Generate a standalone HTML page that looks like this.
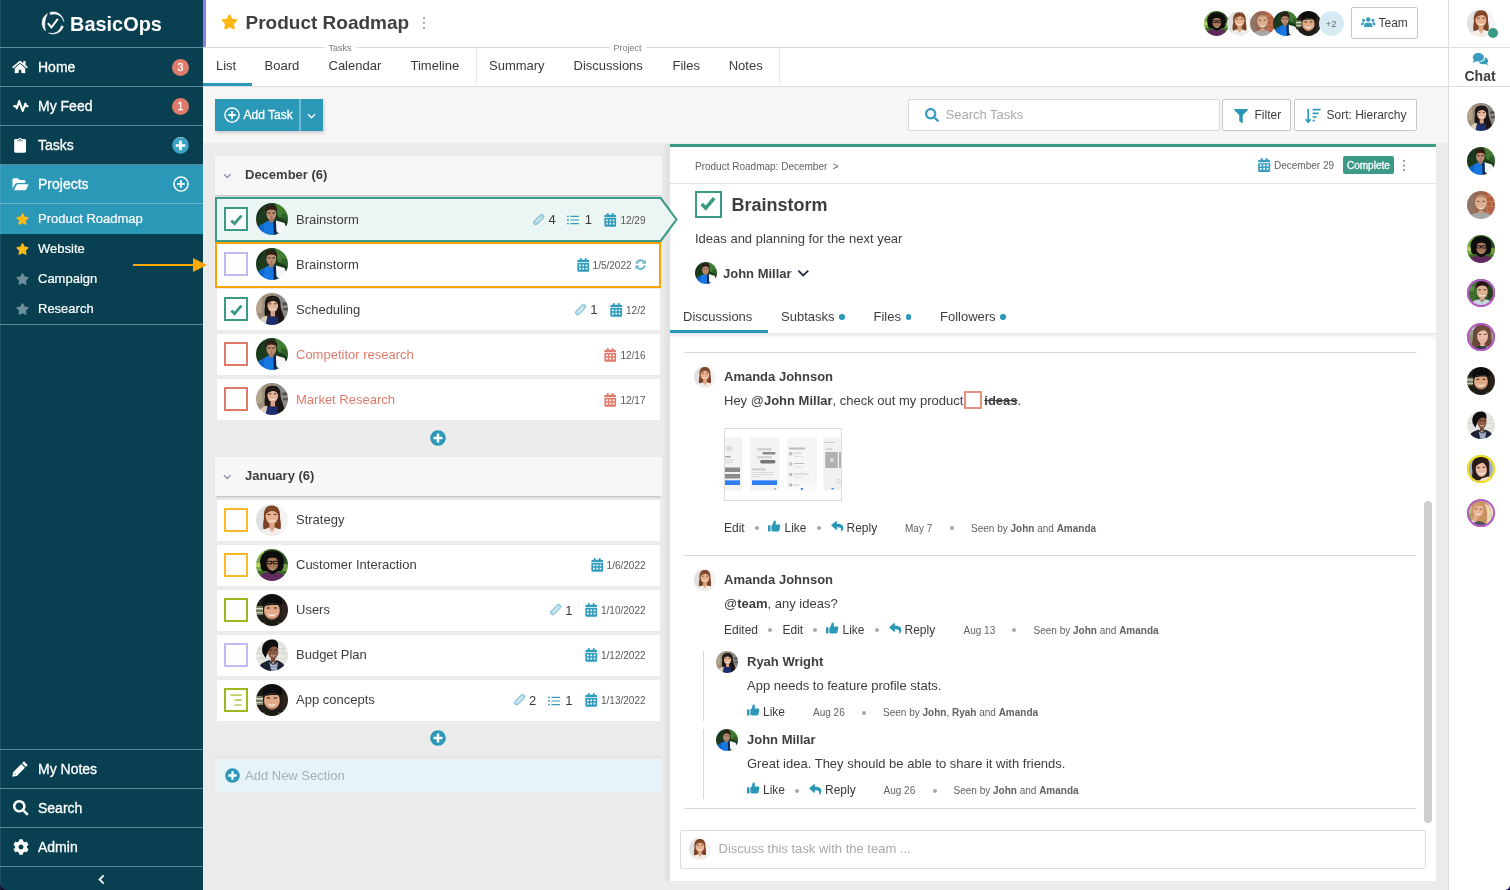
<!DOCTYPE html><html lang="en"><head><meta charset="utf-8"><title>Product Roadmap - BasicOps</title><style>
*{box-sizing:border-box;margin:0;padding:0}
html,body{width:1510px;height:890px;overflow:hidden;background:#ebebeb}
body{font-family:"Liberation Sans",Arial,Helvetica,sans-serif;font-size:13px;color:#3e3e3e;position:relative;-webkit-font-smoothing:antialiased}
#app{position:absolute;left:0;top:0;width:1510px;height:890px;overflow:hidden;will-change:transform}
.abs{position:absolute}
.ic{position:absolute;display:block;overflow:visible}
.av{position:absolute;display:block}
.t{position:absolute;white-space:nowrap;line-height:1}
b{font-weight:700}
/* sidebar */
#sb{position:absolute;left:0;top:0;width:203px;height:890px;background:#084052;color:#fff}
#sb .hl{position:absolute;left:0;width:203px;height:1px;background:#5c8794}
#sb .act{position:absolute;left:0;width:203px;background:#2b98b8}
#sb .m{font-size:14px;color:#fff;left:38px;-webkit-text-stroke:.3px #fff}
#sb .s{font-size:13px;color:#fff;left:38px;-webkit-text-stroke:.2px #fff}
.badge{position:absolute;width:17px;height:17px;border-radius:50%;background:#e07b6b;color:#fff;font-size:10.500px;line-height:17px;text-align:center;-webkit-text-stroke:.3px #fff}
/* header */
#hd{position:absolute;left:203px;top:0;width:1245px;height:48px;background:#fff;border-bottom:1px solid #dcdcdc}
#tabs{position:absolute;left:203px;top:48px;width:1245px;height:39px;background:#fff;border-bottom:1px solid #dcdcdc}
.tab{font-size:13px;color:#3a3a3a}
.btn{position:absolute;background:#fff;border:1px solid #c8c8c8;border-radius:2px}
#tool{position:absolute;left:203px;top:87px;width:1245px;height:56px;background:#f6f6f6}
/* list */
.sec{position:absolute;left:215px;width:447px;height:39px;background:#f7f7f7;box-shadow:0 2px 2px -1px rgba(0,0,0,.22)}
.row{position:absolute;left:217px;width:443px;height:41px;background:#fff}
.cb{position:absolute;width:24px;height:24px;border:2px solid #3a9a85;background:#fff}
.date{font-size:10px;color:#585858}
.cnt{font-size:13px;color:#3a3a3a}
/* detail */
#dp{position:absolute;left:670px;top:144px;width:766px;height:737px;background:#fff;border-top:3px solid #3a9a85}
.sm{font-size:10px;color:#626262}
.act12{font-size:12px;color:#3a3a3a}
.dot{position:absolute;width:4px;height:4px;border-radius:50%;background:#a8a8a8}
.sep{position:absolute;height:1px;background:#d8dbe7}
</style></head><body>
<svg width="0" height="0" style="position:absolute"><defs><clipPath id="cc"><circle cx="16" cy="16" r="16"/></clipPath><filter id="bl" x="-10%" y="-10%" width="120%" height="120%"><feGaussianBlur stdDeviation="0.450"/></filter>
<symbol id="p-john" viewBox="0 0 32 32"><g clip-path="url(#cc)"><g filter="url(#bl)"><g transform="translate(16 14.5) scale(1.0) translate(-16 -14.500)">
<rect width="32" height="32" fill="#1b3b1d"/>
<path d="M19 0H32V17L22 14Z" fill="#3f7d33"/><path d="M23 1L32 9V0Z" fill="#62a44c"/><path d="M0 0H9L5 10L0 14Z" fill="#14301a"/><path d="M26 10L32 12V19L25 15Z" fill="#2d5f2a"/>
<ellipse cx="15.300" cy="6.400" rx="5.800" ry="4.600" fill="#2f2018"/>
<ellipse cx="15.300" cy="10.800" rx="4.900" ry="6.600" fill="#bd8e72"/>
<path d="M10.300 9C11.500 5.800 19 5.800 20.300 9L20.600 6C18.500 3 12 3 10.100 6Z" fill="#2f2018"/>
<path d="M11.800 10H14.500M16.200 10H18.900" stroke="#3d2a20" stroke-width="1.100"/>
<path d="M15.800 12.500L15 16.500" stroke="#8a6048" stroke-width="1" opacity=".7"/>
<rect x="13" y="15.800" width="4.600" height="4" fill="#a9795d"/>
<path d="M0 27L3 23L12.500 17.500L15.500 20.500L18 17.500L20.500 18V32H0Z" fill="#1878e0"/>
<path d="M3 23.500L9 20L7 32H0V27Z" fill="#1166c8"/>
<path d="M20 17.500L28.500 20L31 26L24 31.500L20 28Z" fill="#f6f6f6"/>
<path d="M17.300 18.800L19.900 17.600L20.600 32H17.800Z" fill="#10244f"/>
<path d="M24 31.500L31 26L32 32H24Z" fill="#1878e0"/></g></g></g></symbol>
<symbol id="p-ryah" viewBox="0 0 32 32"><g clip-path="url(#cc)"><g filter="url(#bl)"><g transform="translate(16 14.5) scale(1.0) translate(-16 -14.500)">
<rect width="32" height="32" fill="#9c8f7c"/>
<rect x="20" y="0" width="12" height="32" fill="#8b8a86"/><rect x="0" y="0" width="6" height="20" fill="#b3a48c"/>
<rect x="26.500" y="9.500" width="5.500" height="2.700" fill="#4e4c4a"/><rect x="27" y="15" width="5" height="2.400" fill="#55524f"/>
<path d="M9 13C8 5 12 2.800 16.800 2.800C22 2.800 25 6 24.500 13C25 18 28.500 22 28.500 28L24 31L10 26C8 22 8.500 17 9 13Z" fill="#1e1512"/>
<ellipse cx="16.800" cy="12.400" rx="5.300" ry="6.900" fill="#e2b299"/>
<path d="M11.300 11C11.500 6.500 15 5 18 5.500C21 6 22.500 8.500 22.300 12C21 8.500 18.500 7.500 16.500 8C14 8.500 12.300 9.500 11.300 11Z" fill="#1e1512"/>
<path d="M13.600 14.800C15.300 16.800 18.300 16.800 20 14.800C19.300 17.800 14.300 17.800 13.600 14.800Z" fill="#fff"/>
<path d="M12.800 10.800H15.300M18 10.800H20.500" stroke="#3a2a22" stroke-width=".9"/>
<rect x="14.500" y="18.500" width="4.600" height="5" fill="#d5a189"/>
<path d="M2 32C3 26 6 24 11.500 22.500L13 32Z" fill="#dbcfba"/>
<path d="M9.500 32L11.500 23L16.800 24.500L22 23L24 32Z" fill="#1a2f6e"/>
<path d="M21.500 20C24 22 27 25 28.500 28L25 32H22Z" fill="#1e1512"/></g></g></g></symbol>
<symbol id="p-amanda" viewBox="0 0 32 32"><g clip-path="url(#cc)"><g filter="url(#bl)"><g transform="translate(16 14.5) scale(1.0) translate(-16 -14.500)">
<rect width="32" height="32" fill="#f4f4f4"/>
<rect x="0" y="0" width="12" height="32" fill="#e0e0e0"/>
<path d="M8 14C7 5 11 1.500 16 1.500C21 1.500 24.500 5 24 13C24.500 18 25.500 21 24.500 25L7.500 25C6.500 21 7.500 18 8 14Z" fill="#7c4326"/>
<ellipse cx="15.900" cy="12.200" rx="6.300" ry="8.300" fill="#e6b190"/>
<path d="M9.500 11C9.500 5 14 3.500 17 4C20.500 4.500 22.500 7 22.300 11C20.500 7.500 18 6.500 15.500 7C13 7.500 10.800 9 9.500 11Z" fill="#7f4528"/>
<path d="M12.300 15.300C14.300 17.600 17.700 17.600 19.700 15.300C18.900 18.800 13.100 18.800 12.300 15.300Z" fill="#fff"/>
<path d="M11.500 10.500H14.500M17.500 10.500H20.500" stroke="#5a3a2a" stroke-width="1"/>
<rect x="13.300" y="19.500" width="5.400" height="5" fill="#dba483"/>
<path d="M3 32C4 27 8 25.500 13 23.500L16 27L19 23.500C24 25.500 28 27 29 32Z" fill="#f1ece7"/>
<path d="M13 23.500L16 28.500L19 23.500Z" fill="#e0a988"/></g></g></g></symbol>
<symbol id="p-curly" viewBox="0 0 32 32"><g clip-path="url(#cc)"><g filter="url(#bl)"><g transform="translate(16 14.5) scale(1.0) translate(-16 -14.500)">
<rect width="32" height="32" fill="#3c6b28"/>
<rect x="0" y="0" width="8" height="22" fill="#79ac45"/><rect x="0" y="14" width="6" height="4" fill="#b9d36a"/><rect x="25" y="0" width="7" height="20" fill="#2a5020"/><rect x="24" y="15" width="8" height="7" fill="#6c9c40"/>
<path d="M4.500 16C2.500 7 8 1.500 16.500 1.500C24.500 1.500 29.500 7 27.500 16C27.500 20 26 22 24 22L8 22C6 22 4.500 20 4.500 16Z" fill="#0e0c0b"/>
<ellipse cx="16.400" cy="14.500" rx="5.800" ry="7.600" fill="#a97756"/>
<path d="M10.600 17C10.800 24 13.500 25.200 16.400 25.200C19.300 25.200 22 24 22.200 17C21 20.500 19 21 16.400 21C13.800 21 11.800 20.500 10.600 17Z" fill="#17110e"/>
<path d="M10.400 11.500C11 7 14 6.300 16.400 6.300C18.800 6.300 21.800 7 22.400 11.500C21 9.300 18.800 8.800 16.400 8.800C14 8.800 11.800 9.300 10.400 11.500Z" fill="#0e0c0b"/>
<path d="M10.800 12.300H15.500V14.900H10.800ZM17.300 12.300H22V14.900H17.300ZM15.500 13.100H17.300" fill="none" stroke="#161616" stroke-width="1"/>
<path d="M13.800 19.800C15.200 21.200 17.600 21.200 19 19.800C18.400 22 14.400 22 13.800 19.800Z" fill="#f3ece6"/>
<path d="M1 32C2 26.500 7 24.500 12 23L16.400 26L20.800 23C25.800 24.500 30 26.500 31 32Z" fill="#5f295c"/></g></g></g></symbol>
<symbol id="p-hat" viewBox="0 0 32 32"><g clip-path="url(#cc)"><g filter="url(#bl)"><g transform="translate(16 14.5) scale(1.0) translate(-16 -14.500)">
<rect width="32" height="32" fill="#231b17"/>
<rect x="0" y="12" width="7" height="9" fill="#6f7a5c"/><rect x="0" y="14" width="7" height="1.500" fill="#d8dccb"/><rect x="0" y="18" width="7" height="1.300" fill="#c9cdb9"/><rect x="26" y="10" width="6" height="22" fill="#2f241d"/>
<ellipse cx="15.900" cy="16.500" rx="7.900" ry="9.300" fill="#e0a885"/>
<path d="M6.500 11.500C5.500 3.500 11 0.300 16.500 0.300C22.500 0.300 27 4 25.800 11.500C22 8.800 10.500 8.800 6.500 11.500Z" fill="#0c0c0c"/>
<path d="M6.300 11.200C11 8.400 22 8.400 26.800 11.600C22 10.500 11 10.500 6.300 12.800Z" fill="#1d1d1d"/>
<path d="M10 21C11 25.500 13 26.500 15.900 26.500C18.800 26.500 20.800 25.500 21.800 21C20.500 23.800 18.500 24.300 15.900 24.300C13.300 24.300 11.300 23.800 10 21Z" fill="#5a3d2e" opacity=".55"/>
<path d="M11.800 19.300C14 21.300 17.800 21.300 20 19.300C19.300 23 12.500 23 11.800 19.300Z" fill="#fff"/>
<path d="M10.800 14H14M17.800 14H21" stroke="#2a1d16" stroke-width="1.100"/>
<path d="M1 32C2 28 7 26.500 11.500 25.500L15.900 28L20.300 25.500C25 26.500 30 28 31 32Z" fill="#1d1b18"/>
<path d="M3 30L9 27.500L8 32H3Z" fill="#4b4a32"/><path d="M22 28L27 28.500L26 32H22Z" fill="#45432e"/></g></g></g></symbol>
<symbol id="p-blazer" viewBox="0 0 32 32"><g clip-path="url(#cc)"><g filter="url(#bl)"><g transform="translate(16 14.5) scale(1.0) translate(-16 -14.500)">
<rect width="32" height="32" fill="#e7e7e3"/>
<path d="M0 4.500H32M0 9.500H32M0 14.500H32M0 19.500H32M5 0V4.500M15 0V4.500M26 0V4.500M10 4.500V9.500M28 4.500V9.500M3 9.500V14.500M27 9.500V14.500M6 14.500V19.500M29 14.500V19.500" stroke="#d2d2cd" stroke-width=".7" fill="none"/>
<path d="M6.500 14C4.500 6 9.500 0.500 16 0.500C20 0.300 22.500 3 22.200 7L20 14L12 13L9.500 19Z" fill="#100d0d"/>
<ellipse cx="17.100" cy="12.600" rx="5.300" ry="7.200" fill="#8a5a44"/>
<path d="M11.500 13C10.500 6 14.500 3.800 18 4.300C21 4.800 22.500 7 22.200 9.500C20 7 17 7 15 8.500C13.300 9.700 12.200 11.500 11.500 13Z" fill="#100d0d"/>
<path d="M14.800 15.800C16 17 18.600 17 19.800 15.800C19.300 17.900 15.300 17.900 14.800 15.800Z" fill="#f2e6e0"/>
<path d="M13.500 11H16M18.500 11H21" stroke="#2a1a14" stroke-width=".9"/>
<rect x="14.800" y="18.800" width="4.600" height="4.500" fill="#7a4d39"/>
<path d="M1.500 32C2.500 25.500 7 23 13.500 21L17.100 25L20.700 21C26 23 29.500 25.500 30.500 32Z" fill="#1d2030"/>
<path d="M13 23L15.500 32H21L22 23L17.100 26Z" fill="#8d9db3"/>
<path d="M14 26L20 27M14.500 29L20.500 30" stroke="#c5cedb" stroke-width=".8"/></g></g></g></symbol>
<symbol id="p-bald" viewBox="0 0 32 32"><g clip-path="url(#cc)"><g filter="url(#bl)"><g transform="translate(16 14.5) scale(1.0) translate(-16 -14.500)">
<rect width="32" height="32" fill="#9b6650"/>
<rect x="19" y="0" width="13" height="32" fill="#b25e42"/><rect x="0" y="0" width="8" height="32" fill="#8d7468"/>
<path d="M19 6H32M19 12H32M19 18H32M19 24H32M25 0V6M22 6V12M28 12V18M23 18V24" stroke="#d08a6c" stroke-width=".7" fill="none"/>
<ellipse cx="16" cy="13.500" rx="6.800" ry="8.800" fill="#dcae90"/>
<path d="M9.300 9C10 3.500 22 3.500 22.700 9C20 6.500 12 6.500 9.300 9Z" fill="#a88468" opacity=".8"/>
<path d="M9.300 15C9.500 23.500 12.800 25 16 25C19.200 25 22.500 23.500 22.700 15C21.500 20 19 21 16 21C13 21 10.500 20 9.300 15Z" fill="#8a6a52"/>
<path d="M12.800 18.300C14.500 19.800 17.500 19.800 19.200 18.300C18.600 21 13.400 21 12.800 18.300Z" fill="#fff"/>
<path d="M11.300 11.800H14.300M17.700 11.800H20.700" stroke="#5a4030" stroke-width="1"/>
<rect x="13.300" y="22" width="5.400" height="4" fill="#cf9f82"/>
<path d="M1 32C2 27.500 7 25.500 12.500 24.500L16 26.500L19.500 24.500C25 25.500 30 27.500 31 32Z" fill="#a7a7a7"/></g></g></g></symbol>
<symbol id="p-greenman" viewBox="0 0 32 32"><g clip-path="url(#cc)"><g filter="url(#bl)"><g transform="translate(16 14.5) scale(1.0) translate(-16 -14.500)">
<rect width="32" height="32" fill="#2f5627"/>
<rect x="0" y="0" width="11" height="32" fill="#3d6e2e"/><rect x="2" y="8" width="6" height="6" fill="#5a8e40"/><rect x="24" y="0" width="8" height="22" fill="#28401f"/>
<path d="M10.500 11C9.500 4 13.500 2.500 17.500 2.500C22 2.500 25 5 24 11L22 8H12Z" fill="#231814"/>
<ellipse cx="17.300" cy="14" rx="6.300" ry="8.300" fill="#e0b092"/>
<path d="M10.800 11C12 6.500 22.500 6 24 11L24.200 7.500C21.500 4 13 4 10.800 7.500Z" fill="#231814"/>
<path d="M13.300 17.300C15.300 19.300 19.300 19.300 21.300 17.300C20.500 20.500 14.100 20.500 13.300 17.300Z" fill="#fff"/>
<path d="M12.800 12.300H15.800M18.800 12.300H21.800" stroke="#3a2820" stroke-width="1"/>
<rect x="14.500" y="21" width="5.600" height="3.500" fill="#cfa082"/>
<path d="M2 32C3 26.500 8 24.500 13.500 23L17.300 26L21 23C26.500 24.500 30 26.500 31 32Z" fill="#c3d1da"/></g></g></g></symbol>
<symbol id="p-brownhair" viewBox="0 0 32 32"><g clip-path="url(#cc)"><g filter="url(#bl)"><g transform="translate(16 14.5) scale(1.0) translate(-16 -14.500)">
<rect width="32" height="32" fill="#979d88"/>
<rect x="0" y="4" width="10" height="4" fill="#c5cbd0"/><rect x="0" y="14" width="8" height="10" fill="#8b8f6c"/>
<path d="M7 15C6 5 11.500 2 17.500 2C23.500 2 28.500 5 27.500 15C28 21 29.500 25 28.500 30L5.500 30C4.500 25 6.500 21 7 15Z" fill="#6b4a38"/>
<ellipse cx="17.800" cy="14.700" rx="6.200" ry="8.700" fill="#eabba8"/>
<path d="M11.500 13C11.500 6 15.500 4.500 18.500 5C22 5.500 24.300 8 24 13C22.500 9 20 8 17.500 8.500C15 9 12.800 10.500 11.500 13Z" fill="#73503c"/>
<path d="M15 18.800C16.500 20 19.300 20 20.800 18.800C20.300 21 15.500 21 15 18.800Z" fill="#d98a8a"/>
<path d="M13.300 13H16.300M19.300 13H22.300" stroke="#4a342a" stroke-width="1"/>
<rect x="15" y="22.500" width="5.400" height="4" fill="#dcaa96"/>
<path d="M8 32C9 28 12 27 15 26L17.800 28L20.500 26C23 27 25 28 26 32Z" fill="#2c3a44"/>
<path d="M21 26.500L29 28V32H24Z" fill="#b5a08a"/></g></g></g></symbol>
<symbol id="p-darkhair" viewBox="0 0 32 32"><g clip-path="url(#cc)"><g filter="url(#bl)"><g transform="translate(16 14.5) scale(1.0) translate(-16 -14.500)">
<rect width="32" height="32" fill="#a3aec4"/>
<path d="M6 17C4 6 10 1.500 16 1.500C22 1.500 26.500 5 25.500 14C25.500 19 26 23 24.500 26L8 30C5.500 26 6.500 21 6 17Z" fill="#2b1a16"/>
<ellipse cx="16.300" cy="16.500" rx="6.400" ry="8.500" fill="#e9b9a2" transform="rotate(-8 16.300 16.500)"/>
<path d="M9.500 14C9.500 7 14 4.500 17.500 5C21 5.500 23.500 8 23.300 13C21.500 9 19 8.300 16.500 9C13.500 9.800 11 11.500 9.500 14Z" fill="#2b1a16"/>
<path d="M13 19.800C15 21.800 18.800 21.300 20.300 19C19.800 22.800 14 23.300 13 19.800Z" fill="#fff"/>
<path d="M11.500 14.500H14.500M17.800 14H20.800" stroke="#3a2620" stroke-width="1"/>
<path d="M16 27L24 24.500C28 25.500 30 28 31 32H14Z" fill="#f2dcd8"/>
<path d="M6.500 20C6 25 7 29 9.500 32H4Z" fill="#2b1a16"/></g></g></g></symbol>
<symbol id="p-blonde" viewBox="0 0 32 32"><g clip-path="url(#cc)"><g filter="url(#bl)"><g transform="translate(16 14.5) scale(1.0) translate(-16 -14.500)">
<rect width="32" height="32" fill="#f3eedc"/>
<rect x="0" y="0" width="9" height="24" fill="#97ad5c"/><rect x="0" y="8" width="6" height="8" fill="#c1cc7a"/>
<path d="M5 16C4 6 9 2 14.500 2C20 2 24 4 26 9C28.500 14 29 22 27.500 29L16 29L6 24C5 21 5.500 19 5 16Z" fill="#c9935f"/>
<path d="M20 5C24 6 27 10 27.500 16C28 21 28 26 27 29L22 29C24 22 23.500 12 20 5Z" fill="#ead9b4"/>
<ellipse cx="13" cy="13" rx="5.600" ry="7.300" fill="#ebb698" transform="rotate(12 13 13)"/>
<path d="M7 11C7.500 5.500 11.500 4 14.500 4.500C17.500 5 19.500 7 19.500 11C18 8 16 7.300 14 7.800C11.500 8.300 8.500 9.500 7 11Z" fill="#cf9a66"/>
<path d="M10.300 16.300C12 17.800 14.800 17.800 16.300 16.300C15.800 18.900 11 18.900 10.300 16.300Z" fill="#fff"/>
<path d="M9 11.300H11.800M14.500 11.800H17.300" stroke="#5a3d2c" stroke-width=".9"/>
<path d="M7.500 19C9 18 12 19.500 12.500 22L10 27L6.500 24Z" fill="#e2ab8c"/>
<path d="M5 32C6 27 10 25.500 14 25L20 27L23 32Z" fill="#4c5258"/></g></g></g></symbol>
</defs></svg>
<div id="app">
<div class="abs" style="left:203px;top:143px;width:1245px;height:747px;background:#ebebeb"></div>
<div id="sb">
<div class="act" style="top:164px;height:70px"></div>
<div class="hl" style="top:47px"></div>
<div class="hl" style="top:86px"></div>
<div class="hl" style="top:125px"></div>
<div class="hl" style="top:164px"></div>
<div class="hl" style="top:203px;background:#6fb3c8"></div>
<div class="hl" style="top:324px"></div>
<div class="hl" style="top:749px"></div>
<div class="hl" style="top:788px"></div>
<div class="hl" style="top:827px"></div>
<div class="hl" style="top:866px"></div>
<svg class="ic" style="left:41px;top:11px" width="24" height="24" viewBox="0 0 24 24"><g fill="#fff" stroke="#fff" stroke-width=".5" stroke-linejoin="round"><path d="M6.500 2.700A10.700 10.700 0 0 0 4.500 19.900A24 24 0 0 1 6.500 2.700Z"/><path d="M8.800 1.400A11 11 0 0 1 22.900 10.800A10 10 0 0 0 9.600 3.600Z"/><path d="M22.400 15.500A11 11 0 0 1 7.600 22.100A10 10 0 0 0 20.300 14.800Z"/></g><path d="M6.900 12.200L10.400 16.300L16.900 7.900" fill="none" stroke="#fff" stroke-width="2"/></svg>
<div class="t" style="left:70px;top:13.800px;font-size:20.400px;font-weight:700;color:#fff;transform:scaleX(.977);transform-origin:0 0">BasicOps</div>
<svg class="ic" viewBox="0 0 576 512" width="16" height="14" style="color:#fff;fill:#fff;left:12px;top:60px;" fill="currentColor"><path d="M280.370 148.260L96 300.110V464a16 16 0 0 0 16 16l112.060-.290a16 16 0 0 0 15.920-16V368a16 16 0 0 1 16-16h64a16 16 0 0 1 16 16v95.640a16 16 0 0 0 16 16.050L464 480a16 16 0 0 0 16-16V300L295.670 148.260a12.190 12.190 0 0 0-15.300 0zM571.600 251.470L488 182.560V44.050a12 12 0 0 0-12-12h-56a12 12 0 0 0-12 12v72.610L318.470 43a48 48 0 0 0-61 0L4.340 251.470a12 12 0 0 0-1.600 16.900l25.500 31A12 12 0 0 0 45.150 301l235.220-193.740a12.190 12.190 0 0 1 15.300 0L530.900 301a12 12 0 0 0 16.900-1.600l25.500-31a12 12 0 0 0-1.700-16.930z"/></svg>
<div class="t m" style="left:38px;top:60.00px;font-size:14px;">Home</div>
<div class="badge" style="left:172px;top:58.500px">3</div>
<svg class="ic" viewBox="0 0 16 12" width="16" height="12" style="color:#fff;fill:#fff;left:12.5px;top:100px;" fill="currentColor"><path d="M0.400 6.100H2.600L3.800 8.300L6.200 1L9.700 11L12.400 3.600L13.400 6.100H15.400" fill="none" stroke="currentColor" stroke-width="2.100" stroke-linejoin="round" stroke-linecap="butt"/></svg>
<div class="t m" style="left:38px;top:99.00px;font-size:14px;">My Feed</div>
<div class="badge" style="left:172px;top:97.500px">1</div>
<svg class="ic" viewBox="0 0 12 16" width="12.2" height="15.8" style="color:#fff;fill:#fff;left:14.4px;top:136.8px;" fill="currentColor"><path d="M1.500 2H4.200A1.900 1.900 0 0 1 7.800 2H10.500A1.500 1.500 0 0 1 12 3.500V14.500A1.500 1.500 0 0 1 10.500 16H1.500A1.500 1.500 0 0 1 0 14.500V3.500A1.500 1.500 0 0 1 1.500 2ZM6 1.400A0.800 0.800 0 1 0 6 3A0.800 0.800 0 1 0 6 1.400Z" fill-rule="evenodd"/><rect x="3" y="3.300" width="6" height="1.100" fill="#084052" opacity=".55"/></svg>
<div class="t m" style="left:38px;top:138.00px;font-size:14px;">Tasks</div>
<div class="abs" style="left:172.800px;top:137.300px;width:15.400px;height:15.400px;border-radius:50%;background:#fff"></div>
<svg class="ic" viewBox="0 0 512 512" width="17" height="17" style="color:#3ba3c3;fill:#3ba3c3;left:172px;top:136.5px;" fill="currentColor"><path d="M256 8C119 8 8 119 8 256s111 248 248 248 248-111 248-248S393 8 256 8zm144 276c0 6.600-5.400 12-12 12h-92v92c0 6.600-5.400 12-12 12h-56c-6.600 0-12-5.400-12-12v-92h-92c-6.600 0-12-5.400-12-12v-56c0-6.600 5.400-12 12-12h92v-92c0-6.600 5.400-12 12-12h56c6.600 0 12 5.400 12 12v92h92c6.600 0 12 5.400 12 12v56z"/></svg>
<svg class="ic" viewBox="0 0 18 14" width="17" height="12.5" style="color:#fff;fill:#fff;left:12px;top:178px;" fill="currentColor"><path d="M17.800 7.900L15.300 12.900A1.700 1.700 0 0 1 13.800 13.800H1.600L4.600 7.800A1.700 1.700 0 0 1 6.100 6.900H17.200C17.800 6.900 18.100 7.400 17.800 7.900ZM6.100 5.700H14.500V3.700A1.500 1.500 0 0 0 13 2.200H8L6.200 0.300H1.500A1.500 1.500 0 0 0 0 1.800V11.800L2.900 6.900C3.600 5.900 4.800 5.700 6.100 5.700Z"/></svg>
<div class="t m" style="left:38px;top:177.00px;font-size:14px;">Projects</div>
<svg class="ic" viewBox="0 0 16 16" width="16" height="16" style="color:#fff;fill:#fff;left:172.5px;top:176px;" fill="currentColor"><circle cx="8" cy="8" r="7.100" fill="none" stroke="currentColor" stroke-width="1.450"/><path d="M8 4.300V11.700M4.300 8H11.700" stroke="currentColor" stroke-width="1.900" fill="none"/></svg>
<svg class="ic" viewBox="0 0 576 512" width="13" height="12" style="color:#fdb913;fill:#fdb913;left:15.5px;top:212.5px;" fill="currentColor"><path d="M259.3 17.8L194 150.2 47.9 171.5c-26.2 3.8-36.7 36.1-17.7 54.6l105.7 103-25 145.5c-4.500 26.300 23.200 46 46.400 33.700L288 439.600l130.700 68.700c23.200 12.200 50.900-7.400 46.400-33.700l-25-145.500 105.700-103c19-18.500 8.500-50.800-17.700-54.600L382 150.200 316.700 17.800c-11.700-23.600-45.600-23.900-57.400 0z"/></svg>
<div class="t s" style="left:38px;top:211.80px;font-size:13px;">Product Roadmap</div>
<svg class="ic" viewBox="0 0 576 512" width="13" height="12" style="color:#fdb913;fill:#fdb913;left:15.5px;top:242.5px;" fill="currentColor"><path d="M259.3 17.8L194 150.2 47.9 171.5c-26.2 3.8-36.7 36.1-17.7 54.6l105.7 103-25 145.5c-4.500 26.300 23.200 46 46.400 33.700L288 439.600l130.700 68.700c23.200 12.200 50.900-7.400 46.400-33.700l-25-145.500 105.700-103c19-18.500 8.500-50.800-17.700-54.600L382 150.200 316.700 17.800c-11.700-23.600-45.600-23.900-57.400 0z"/></svg>
<div class="t s" style="left:38px;top:241.80px;font-size:13px;">Website</div>
<svg class="ic" viewBox="0 0 576 512" width="13" height="12" style="color:#6d8e9a;fill:#6d8e9a;left:15.5px;top:272.5px;" fill="currentColor"><path d="M259.3 17.8L194 150.2 47.9 171.5c-26.2 3.8-36.7 36.1-17.7 54.6l105.7 103-25 145.5c-4.500 26.300 23.200 46 46.400 33.700L288 439.600l130.700 68.700c23.200 12.200 50.900-7.400 46.400-33.700l-25-145.500 105.700-103c19-18.500 8.500-50.800-17.700-54.600L382 150.200 316.700 17.800c-11.700-23.600-45.600-23.900-57.400 0z"/></svg>
<div class="t s" style="left:38px;top:271.80px;font-size:13px;">Campaign</div>
<svg class="ic" viewBox="0 0 576 512" width="13" height="12" style="color:#6d8e9a;fill:#6d8e9a;left:15.5px;top:302.5px;" fill="currentColor"><path d="M259.3 17.8L194 150.2 47.9 171.5c-26.2 3.8-36.7 36.1-17.7 54.6l105.7 103-25 145.5c-4.500 26.300 23.200 46 46.400 33.700L288 439.600l130.700 68.700c23.200 12.200 50.900-7.400 46.400-33.700l-25-145.500 105.700-103c19-18.500 8.500-50.800-17.700-54.600L382 150.200 316.700 17.800c-11.700-23.600-45.600-23.900-57.400 0z"/></svg>
<div class="t s" style="left:38px;top:301.80px;font-size:13px;">Research</div>
<svg class="ic" viewBox="0 0 16 16" width="17" height="17" style="color:#fff;fill:#fff;left:12px;top:760.3px;" fill="currentColor"><path d="M11.300 1.200L14.800 4.700L13 6.500L9.500 3ZM8.700 3.800L12.200 7.300L4.500 15L0.300 15.700L1 11.500Z"/><path d="M2 12.600L3.400 14" stroke="#084052" stroke-width=".7" fill="none"/></svg>
<div class="t m" style="left:38px;top:762.00px;font-size:14px;">My Notes</div>
<svg class="ic" viewBox="0 0 512 512" width="15.5" height="15.5" style="color:#fff;fill:#fff;left:12.5px;top:800px;" fill="currentColor"><path d="M505 442.700L405.300 343c-4.500-4.500-10.600-7-17-7H372c27.600-35.300 44-79.700 44-128C416 93.100 322.900 0 208 0S0 93.100 0 208s93.100 208 208 208c48.300 0 92.700-16.400 128-44v16.300c0 6.400 2.500 12.500 7 17l99.700 99.700c9.400 9.400 24.600 9.400 33.900 0l28.300-28.300c9.400-9.400 9.400-24.600.1-34zM208 336c-70.700 0-128-57.200-128-128 0-70.700 57.200-128 128-128 70.700 0 128 57.200 128 128 0 70.700-57.200 128-128 128z"/></svg>
<div class="t m" style="left:38px;top:801.00px;font-size:14px;">Search</div>
<svg class="ic" viewBox="0 0 512 512" width="16" height="16" style="color:#fff;fill:#fff;left:12.5px;top:839px;" fill="currentColor"><path d="M487.400 315.700l-42.600-24.600c4.300-23.200 4.300-47 0-70.200l42.600-24.600c4.900-2.800 7.100-8.600 5.500-14-11.100-35.600-30-67.800-54.700-94.600-3.800-4.100-10-5.100-14.800-2.300L380.800 110c-17.900-15.400-38.500-27.300-60.800-35.100V25.800c0-5.600-3.900-10.500-9.400-11.700-36.700-8.200-74.300-7.800-109.200 0-5.500 1.200-9.400 6.100-9.400 11.700V75c-22.200 7.900-42.800 19.800-60.800 35.100L88.700 85.500c-4.900-2.800-11-1.900-14.800 2.300-24.700 26.700-43.600 58.900-54.700 94.600-1.700 5.400.6 11.200 5.500 14L67.300 221c-4.300 23.200-4.300 47 0 70.200l-42.600 24.600c-4.900 2.800-7.100 8.600-5.500 14 11.100 35.600 30 67.800 54.700 94.600 3.800 4.100 10 5.100 14.800 2.300l42.600-24.600c17.900 15.400 38.500 27.300 60.800 35.100v49.200c0 5.600 3.900 10.500 9.400 11.700 36.700 8.200 74.300 7.800 109.200 0 5.500-1.200 9.400-6.100 9.400-11.700v-49.200c22.200-7.900 42.800-19.800 60.800-35.100l42.600 24.600c4.900 2.800 11 1.900 14.800-2.300 24.700-26.700 43.600-58.900 54.700-94.600 1.500-5.500-.7-11.300-5.600-14.100zM256 336c-44.100 0-80-35.900-80-80s35.900-80 80-80 80 35.900 80 80-35.900 80-80 80z"/></svg>
<div class="t m" style="left:38px;top:840.00px;font-size:14px;">Admin</div>
<svg class="ic" viewBox="0 0 8 12" width="7" height="11" style="color:#e6eef0;fill:#e6eef0;left:97.5px;top:873.5px;" fill="currentColor"><path d="M6.500 1.200L1.800 6L6.500 10.800" fill="none" stroke="currentColor" stroke-width="2.200" stroke-linecap="butt"/></svg>
</div>
<div class="abs" style="left:133px;top:264px;width:62px;height:1.500px;background:#fba900"></div>
<svg class="ic" style="left:193px;top:257.500px" width="14" height="14" viewBox="0 0 14 14"><path d="M0 0L14 7L0 14Z" fill="#fba900"/></svg>
<div id="hd"></div>
<div class="abs" style="left:203px;top:0;width:3px;height:47px;background:#8a7ff0"></div>
<svg class="ic" viewBox="0 0 576 512" width="17" height="15.5" style="color:#fdb913;fill:#fdb913;left:220.5px;top:13.5px;" fill="currentColor"><path d="M259.3 17.8L194 150.2 47.9 171.5c-26.2 3.8-36.7 36.1-17.7 54.6l105.7 103-25 145.5c-4.500 26.300 23.200 46 46.400 33.700L288 439.600l130.700 68.700c23.200 12.200 50.900-7.400 46.400-33.700l-25-145.500 105.700-103c19-18.500 8.500-50.800-17.700-54.600L382 150.200 316.700 17.800c-11.700-23.600-45.600-23.900-57.400 0z"/></svg>
<div class="t " style="left:245.5px;top:13.40px;font-size:19px;font-weight:700;color:#404040">Product Roadmap</div>
<svg class="ic" viewBox="0 0 4 14" width="4" height="14" style="color:#9a9a9a;fill:#9a9a9a;left:422px;top:16px;" fill="currentColor"><circle cx="2" cy="2" r="1.100"/><circle cx="2" cy="7" r="1.100"/><circle cx="2" cy="12" r="1.100"/></svg>
<svg class="av" style="left:1203.5px;top:10.5px;" width="25" height="25" viewBox="0 0 32 32"><use href="#p-curly"/></svg>
<svg class="av" style="left:1226.5px;top:10.5px;" width="25" height="25" viewBox="0 0 32 32"><use href="#p-amanda"/></svg>
<svg class="av" style="left:1249.5px;top:10.5px;" width="25" height="25" viewBox="0 0 32 32"><use href="#p-bald"/></svg>
<svg class="av" style="left:1272.5px;top:10.5px;" width="25" height="25" viewBox="0 0 32 32"><use href="#p-john"/></svg>
<svg class="av" style="left:1295.5px;top:10.5px;" width="25" height="25" viewBox="0 0 32 32"><use href="#p-hat"/></svg>
<div class="abs" style="left:1318.500px;top:10.500px;width:25px;height:25px;border-radius:50%;background:#d5eaf2;color:#707070;font-size:9.500px;line-height:25px;text-align:center">+2</div>
<div class="btn" style="left:1350.500px;top:7px;width:67px;height:32px"></div>
<svg class="ic" viewBox="0 0 20 14" width="14.5" height="10" style="color:#3a9dbd;fill:#3a9dbd;left:1360.5px;top:17px;" fill="currentColor"><circle cx="10" cy="3.600" r="3.100"/><path d="M4.200 14V11.800A3.600 3.600 0 0 1 7.800 8.200H12.200A3.600 3.600 0 0 1 15.800 11.800V14Z"/><circle cx="3.400" cy="4.600" r="2.100"/><circle cx="16.600" cy="4.600" r="2.100"/><path d="M0 11.500V10A2.600 2.600 0 0 1 2.600 7.400H4.800A4.600 4.600 0 0 0 3.200 11V11.500ZM20 11.500V10A2.600 2.600 0 0 0 17.400 7.400H15.200A4.600 4.600 0 0 1 16.800 11V11.500Z"/></svg>
<div class="t " style="left:1378.5px;top:17.00px;font-size:12px;">Team</div>
<div id="tabs"></div>
<div class="abs" style="left:203px;top:83px;width:49px;height:3px;background:#2b98b8"></div>
<div class="abs" style="left:476px;top:48px;width:1px;height:36px;background:#e6e6e6"></div>
<div class="abs" style="left:779px;top:48px;width:1px;height:36px;background:#e6e6e6"></div>
<div class="t tab" style="left:216px;top:59.00px;font-size:13px;">List</div>
<div class="t tab" style="left:264.5px;top:59.00px;font-size:13px;">Board</div>
<div class="t tab" style="left:328.5px;top:59.00px;font-size:13px;">Calendar</div>
<div class="t tab" style="left:410.5px;top:59.00px;font-size:13px;">Timeline</div>
<div class="t tab" style="left:489px;top:59.00px;font-size:13px;">Summary</div>
<div class="t tab" style="left:573.5px;top:59.00px;font-size:13px;">Discussions</div>
<div class="t tab" style="left:672.5px;top:59.00px;font-size:13px;">Files</div>
<div class="t tab" style="left:728.7px;top:59.00px;font-size:13px;">Notes</div>
<div class="t" style="left:324.500px;top:43.800px;font-size:9px;color:#777;background:#fff;padding:0 4px">Tasks</div>
<div class="t" style="left:609.500px;top:43.800px;font-size:9px;color:#777;background:#fff;padding:0 4px">Project</div>
<div id="tool"></div>
<div class="abs" style="left:215px;top:99px;width:107.500px;height:32px;background:#2b98b8;box-shadow:1px 2px 3px rgba(0,0,0,.18)"></div>
<div class="abs" style="left:299px;top:99px;width:1.500px;height:32px;background:#6dbad2"></div>
<svg class="ic" viewBox="0 0 16 16" width="16" height="16" style="color:#fff;fill:#fff;left:224px;top:107px;" fill="currentColor"><circle cx="8" cy="8" r="7.100" fill="none" stroke="currentColor" stroke-width="1.450"/><path d="M8 4.300V11.700M4.300 8H11.700" stroke="currentColor" stroke-width="1.900" fill="none"/></svg>
<div class="t " style="left:243.5px;top:109.00px;font-size:12px;color:#fff;-webkit-text-stroke:.3px #fff">Add Task</div>
<svg class="ic" viewBox="0 0 12 8" width="9" height="6" style="color:#fff;fill:#fff;left:306.5px;top:112.5px;" fill="currentColor"><path d="M1.200 1.500L6 6.300L10.800 1.500" fill="none" stroke="currentColor" stroke-width="1.800"/></svg>
<div class="btn" style="left:908px;top:99px;width:312px;height:32px;border-color:#d8d8d8"></div>
<svg class="ic" viewBox="0 0 512 512" width="14" height="14" style="color:#3a9dbd;fill:#3a9dbd;left:924.8px;top:108px;" fill="currentColor"><path d="M505 442.700L405.300 343c-4.500-4.500-10.600-7-17-7H372c27.600-35.300 44-79.700 44-128C416 93.100 322.900 0 208 0S0 93.100 0 208s93.100 208 208 208c48.300 0 92.700-16.400 128-44v16.300c0 6.400 2.500 12.500 7 17l99.700 99.700c9.400 9.400 24.600 9.400 33.900 0l28.300-28.300c9.400-9.400 9.400-24.600.1-34zM208 336c-70.700 0-128-57.200-128-128 0-70.700 57.200-128 128-128 70.700 0 128 57.200 128 128 0 70.700-57.200 128-128 128z"/></svg>
<div class="t " style="left:945.5px;top:107.90px;font-size:13px;color:#a9a9a9">Search Tasks</div>
<div class="btn" style="left:1222px;top:99px;width:68.500px;height:32px"></div>
<svg class="ic" viewBox="0 0 512 512" width="16" height="14" style="color:#2b98b8;fill:#2b98b8;left:1232.5px;top:108.5px;" fill="currentColor"><path d="M487.976 0H24.028C2.710 0-8.047 25.866 7.058 40.971L192 225.941V432c0 7.831 3.821 15.170 10.237 19.662l80 55.980C298.020 518.690 320 507.493 320 487.980V225.941l184.947-184.970C520.021 25.896 509.338 0 487.976 0z"/></svg>
<div class="t " style="left:1254.5px;top:109.00px;font-size:12px;">Filter</div>
<div class="btn" style="left:1294px;top:99px;width:123px;height:32px"></div>
<svg class="ic" viewBox="0 0 16 16" width="16" height="16" style="color:#2b98b8;fill:#2b98b8;left:1304.5px;top:107.5px;" fill="currentColor"><path d="M3.200 0.800V13.500M0.700 11.200L3.200 14.200L5.700 11.200" fill="none" stroke="currentColor" stroke-width="1.600" stroke-linejoin="round"/><path d="M7.600 1.600H15.600M7.600 5.300H13.600M7.600 9H11.600M7.600 12.700H9.600" stroke="currentColor" stroke-width="1.700" fill="none"/></svg>
<div class="t " style="left:1326.5px;top:109.00px;font-size:12px;">Sort: Hierarchy</div>
<div class="sec" style="top:156px"></div>
<svg class="ic" viewBox="0 0 12 8" width="8.5" height="5.8" style="color:#8c8ca6;fill:#8c8ca6;left:223px;top:172.5px;" fill="currentColor"><path d="M1.200 1.500L6 6.300L10.800 1.500" fill="none" stroke="currentColor" stroke-width="1.800"/></svg>
<div class="t " style="left:245px;top:168.10px;font-size:13px;font-weight:700;">December (6)</div>
<svg class="ic" style="left:215px;top:197.0px" width="464" height="45" viewBox="0 0 464 45"><path d="M1 1H445.500L461.500 22.500L445.500 44H1Z" fill="#ebf5f3" stroke="#3a9a85" stroke-width="2"/></svg>
<div class="cb" style="left:224px;top:207px;border-color:#3a9a85"></div>
<svg class="ic" viewBox="0 0 13 12" width="13" height="12" style="color:#3a9a85;fill:#3a9a85;left:229.7px;top:213.7px;" fill="currentColor"><path d="M1.300 6.400L4.600 9.700L11.400 1.700" fill="none" stroke="currentColor" stroke-width="2.800"/></svg>
<svg class="av" style="left:256.0px;top:203.0px;" width="32" height="32" viewBox="0 0 32 32"><use href="#p-john"/></svg>
<div class="t " style="left:296px;top:213.00px;font-size:13px;">Brainstorm</div>
<div class="t date" style="left:620.48px;top:215.70px;font-size:10px;">12/29</div>
<svg class="ic" viewBox="0 0 12 14" width="12.5" height="13.7" style="color:#2f9bbd;fill:#2f9bbd;left:604.48px;top:212.5px;" fill="currentColor"><path d="M0 3A1.300 1.300 0 0 1 1.300 1.700H2.600V0.500A0.500 0.500 0 0 1 3.100 0H3.900A0.500 0.500 0 0 1 4.400 0.500V1.700H7.600V0.500A0.500 0.500 0 0 1 8.100 0H8.900A0.500 0.500 0 0 1 9.400 0.500V1.700H10.700A1.300 1.300 0 0 1 12 3V4.300H0ZM0 5.200H12V12.700A1.300 1.300 0 0 1 10.700 14H1.300A1.300 1.300 0 0 1 0 12.700ZM1.700 6.600V8.400H3.500V6.600ZM5.100 6.600V8.400H6.900V6.600ZM8.500 6.600V8.400H10.300V6.600ZM1.700 10V11.800H3.500V10ZM5.100 10V11.800H6.900V10ZM8.500 10V11.800H10.300V10Z" fill-rule="evenodd"/></svg>
<div class="t cnt" style="left:584.7520000000001px;top:213.00px;font-size:13px;">1</div>
<svg class="ic" viewBox="0 0 14 11" width="12" height="10" style="color:#3a9dbd;fill:#3a9dbd;left:567.2520000000001px;top:215.0px;" fill="currentColor"><path d="M4 1.300H14M4 5.500H14M4 9.700H14" stroke="currentColor" stroke-width="1.300" fill="none"/><circle cx="1.100" cy="1.300" r="1.100"/><circle cx="1.100" cy="5.500" r="1.100"/><circle cx="1.100" cy="9.700" r="1.100"/></svg>
<div class="t cnt" style="left:548.5240000000001px;top:213.00px;font-size:13px;">4</div>
<svg class="ic" viewBox="0 0 12 12" width="11.3" height="11.3" style="color:#79bdd3;fill:#79bdd3;left:533.2240000000002px;top:213.6px;" fill="currentColor"><g transform="rotate(45 6 6)"><rect x="3.600" y="-0.800" width="4.800" height="13.600" rx="2.400" fill="currentColor" opacity=".55"/><rect x="3.600" y="-0.800" width="4.800" height="13.600" rx="2.400" fill="none" stroke="currentColor" stroke-width="1"/><path d="M6 2.200V9.200" stroke="#fff" stroke-width="1" opacity=".9"/></g></svg>
<div class="abs" style="left:215px;top:242.0px;width:446px;height:45.500px;background:#fff;border:2px solid #f7a400"></div>
<div class="cb" style="left:224px;top:252px;border-color:#c4b8f4"></div>
<svg class="av" style="left:256.0px;top:248.0px;" width="32" height="32" viewBox="0 0 32 32"><use href="#p-john"/></svg>
<div class="t " style="left:296px;top:258.00px;font-size:13px;">Brainstorm</div>
<svg class="ic" viewBox="0 0 12 12" width="11.3" height="11.3" style="color:#6fb8d0;fill:#6fb8d0;left:634.5px;top:259.0px;" fill="currentColor"><path d="M1.600 5.200A4.500 4.500 0 0 1 9.600 3.200" fill="none" stroke="currentColor" stroke-width="2.100"/><path d="M11.600 0.600V5H7.200Z"/><path d="M10.400 6.800A4.500 4.500 0 0 1 2.400 8.800" fill="none" stroke="currentColor" stroke-width="2.100"/><path d="M0.400 11.400V7H4.800Z"/></svg>
<div class="t date" style="left:592.58px;top:260.70px;font-size:10px;">1/5/2022</div>
<svg class="ic" viewBox="0 0 12 14" width="12.5" height="13.7" style="color:#2f9bbd;fill:#2f9bbd;left:576.58px;top:257.5px;" fill="currentColor"><path d="M0 3A1.300 1.300 0 0 1 1.300 1.700H2.600V0.500A0.500 0.500 0 0 1 3.100 0H3.900A0.500 0.500 0 0 1 4.400 0.500V1.700H7.600V0.500A0.500 0.500 0 0 1 8.100 0H8.900A0.500 0.500 0 0 1 9.400 0.500V1.700H10.700A1.300 1.300 0 0 1 12 3V4.300H0ZM0 5.200H12V12.700A1.300 1.300 0 0 1 10.700 14H1.300A1.300 1.300 0 0 1 0 12.700ZM1.700 6.600V8.400H3.500V6.600ZM5.100 6.600V8.400H6.900V6.600ZM8.500 6.600V8.400H10.300V6.600ZM1.700 10V11.800H3.500V10ZM5.100 10V11.800H6.900V10ZM8.500 10V11.800H10.300V10Z" fill-rule="evenodd"/></svg>
<div class="row" style="top:289.0px"></div>
<div class="cb" style="left:224px;top:297px;border-color:#3a9a85"></div>
<svg class="ic" viewBox="0 0 13 12" width="13" height="12" style="color:#3a9a85;fill:#3a9a85;left:229.7px;top:303.7px;" fill="currentColor"><path d="M1.300 6.400L4.600 9.700L11.400 1.700" fill="none" stroke="currentColor" stroke-width="2.800"/></svg>
<svg class="av" style="left:256.0px;top:293.0px;" width="32" height="32" viewBox="0 0 32 32"><use href="#p-ryah"/></svg>
<div class="t " style="left:296px;top:303.00px;font-size:13px;">Scheduling</div>
<div class="t date" style="left:626.04px;top:305.70px;font-size:10px;">12/2</div>
<svg class="ic" viewBox="0 0 12 14" width="12.5" height="13.7" style="color:#2f9bbd;fill:#2f9bbd;left:610.04px;top:302.5px;" fill="currentColor"><path d="M0 3A1.300 1.300 0 0 1 1.300 1.700H2.600V0.500A0.500 0.500 0 0 1 3.100 0H3.900A0.500 0.500 0 0 1 4.400 0.500V1.700H7.600V0.500A0.500 0.500 0 0 1 8.100 0H8.900A0.500 0.500 0 0 1 9.400 0.500V1.700H10.700A1.300 1.300 0 0 1 12 3V4.300H0ZM0 5.200H12V12.700A1.300 1.300 0 0 1 10.700 14H1.300A1.300 1.300 0 0 1 0 12.700ZM1.700 6.600V8.400H3.500V6.600ZM5.100 6.600V8.400H6.900V6.600ZM8.500 6.600V8.400H10.300V6.600ZM1.700 10V11.800H3.500V10ZM5.100 10V11.800H6.900V10ZM8.500 10V11.800H10.300V10Z" fill-rule="evenodd"/></svg>
<div class="t cnt" style="left:590.312px;top:303.00px;font-size:13px;">1</div>
<svg class="ic" viewBox="0 0 12 12" width="11.3" height="11.3" style="color:#79bdd3;fill:#79bdd3;left:575.0120000000001px;top:303.6px;" fill="currentColor"><g transform="rotate(45 6 6)"><rect x="3.600" y="-0.800" width="4.800" height="13.600" rx="2.400" fill="currentColor" opacity=".55"/><rect x="3.600" y="-0.800" width="4.800" height="13.600" rx="2.400" fill="none" stroke="currentColor" stroke-width="1"/><path d="M6 2.200V9.200" stroke="#fff" stroke-width="1" opacity=".9"/></g></svg>
<div class="row" style="top:334.0px"></div>
<div class="cb" style="left:224px;top:342px;border-color:#e07b6b"></div>
<svg class="av" style="left:256.0px;top:338.0px;" width="32" height="32" viewBox="0 0 32 32"><use href="#p-john"/></svg>
<div class="t " style="left:296px;top:348.00px;font-size:13px;color:#e07b6b">Competitor research</div>
<div class="t date" style="left:620.48px;top:350.70px;font-size:10px;">12/16</div>
<svg class="ic" viewBox="0 0 12 14" width="12.5" height="13.7" style="color:#e07b6b;fill:#e07b6b;left:604.48px;top:347.5px;" fill="currentColor"><path d="M0 3A1.300 1.300 0 0 1 1.300 1.700H2.600V0.500A0.500 0.500 0 0 1 3.100 0H3.900A0.500 0.500 0 0 1 4.400 0.500V1.700H7.600V0.500A0.500 0.500 0 0 1 8.100 0H8.900A0.500 0.500 0 0 1 9.400 0.500V1.700H10.700A1.300 1.300 0 0 1 12 3V4.300H0ZM0 5.200H12V12.700A1.300 1.300 0 0 1 10.700 14H1.300A1.300 1.300 0 0 1 0 12.700ZM1.700 6.600V8.400H3.500V6.600ZM5.100 6.600V8.400H6.900V6.600ZM8.500 6.600V8.400H10.300V6.600ZM1.700 10V11.800H3.500V10ZM5.100 10V11.800H6.900V10ZM8.500 10V11.800H10.300V10Z" fill-rule="evenodd"/></svg>
<div class="row" style="top:379.0px"></div>
<div class="cb" style="left:224px;top:387px;border-color:#e07b6b"></div>
<svg class="av" style="left:256.0px;top:383.0px;" width="32" height="32" viewBox="0 0 32 32"><use href="#p-ryah"/></svg>
<div class="t " style="left:296px;top:393.00px;font-size:13px;color:#e07b6b">Market Research</div>
<div class="t date" style="left:620.48px;top:395.70px;font-size:10px;">12/17</div>
<svg class="ic" viewBox="0 0 12 14" width="12.5" height="13.7" style="color:#e07b6b;fill:#e07b6b;left:604.48px;top:392.5px;" fill="currentColor"><path d="M0 3A1.300 1.300 0 0 1 1.300 1.700H2.600V0.500A0.500 0.500 0 0 1 3.100 0H3.900A0.500 0.500 0 0 1 4.400 0.500V1.700H7.600V0.500A0.500 0.500 0 0 1 8.100 0H8.900A0.500 0.500 0 0 1 9.400 0.500V1.700H10.700A1.300 1.300 0 0 1 12 3V4.300H0ZM0 5.200H12V12.700A1.300 1.300 0 0 1 10.700 14H1.300A1.300 1.300 0 0 1 0 12.700ZM1.700 6.600V8.400H3.500V6.600ZM5.100 6.600V8.400H6.900V6.600ZM8.500 6.600V8.400H10.300V6.600ZM1.700 10V11.800H3.500V10ZM5.100 10V11.800H6.900V10ZM8.500 10V11.800H10.300V10Z" fill-rule="evenodd"/></svg>
<div class="abs" style="left:431px;top:431px;width:14px;height:14px;border-radius:50%;background:#fff"></div>
<svg class="ic" viewBox="0 0 512 512" width="16" height="16" style="color:#2b98b8;fill:#2b98b8;left:430.1px;top:429.9px;" fill="currentColor"><path d="M256 8C119 8 8 119 8 256s111 248 248 248 248-111 248-248S393 8 256 8zm144 276c0 6.600-5.400 12-12 12h-92v92c0 6.600-5.400 12-12 12h-56c-6.600 0-12-5.400-12-12v-92h-92c-6.600 0-12-5.400-12-12v-56c0-6.600 5.400-12 12-12h92v-92c0-6.600 5.400-12 12-12h56c6.600 0 12 5.400 12 12v92h92c6.600 0 12 5.400 12 12v56z"/></svg>
<div class="sec" style="top:457px"></div>
<svg class="ic" viewBox="0 0 12 8" width="8.5" height="5.8" style="color:#8c8ca6;fill:#8c8ca6;left:223px;top:473.5px;" fill="currentColor"><path d="M1.200 1.500L6 6.300L10.800 1.500" fill="none" stroke="currentColor" stroke-width="1.800"/></svg>
<div class="t " style="left:245px;top:469.10px;font-size:13px;font-weight:700;">January (6)</div>
<div class="row" style="top:499.5px"></div>
<div class="cb" style="left:224px;top:508px;border-color:#fbb829"></div>
<svg class="av" style="left:256.0px;top:504.0px;" width="32" height="32" viewBox="0 0 32 32"><use href="#p-amanda"/></svg>
<div class="t " style="left:296px;top:513.00px;font-size:13px;">Strategy</div>
<div class="row" style="top:544.5px"></div>
<div class="cb" style="left:224px;top:553px;border-color:#fbb829"></div>
<svg class="av" style="left:256.0px;top:549.0px;" width="32" height="32" viewBox="0 0 32 32"><use href="#p-curly"/></svg>
<div class="t " style="left:296px;top:558.00px;font-size:13px;">Customer Interaction</div>
<div class="t date" style="left:606.58px;top:561.20px;font-size:10px;">1/6/2022</div>
<svg class="ic" viewBox="0 0 12 14" width="12.5" height="13.7" style="color:#2f9bbd;fill:#2f9bbd;left:590.58px;top:558px;" fill="currentColor"><path d="M0 3A1.300 1.300 0 0 1 1.300 1.700H2.600V0.500A0.500 0.500 0 0 1 3.100 0H3.900A0.500 0.500 0 0 1 4.400 0.500V1.700H7.600V0.500A0.500 0.500 0 0 1 8.100 0H8.900A0.500 0.500 0 0 1 9.400 0.500V1.700H10.700A1.300 1.300 0 0 1 12 3V4.300H0ZM0 5.200H12V12.700A1.300 1.300 0 0 1 10.700 14H1.300A1.300 1.300 0 0 1 0 12.700ZM1.700 6.600V8.400H3.500V6.600ZM5.100 6.600V8.400H6.900V6.600ZM8.500 6.600V8.400H10.300V6.600ZM1.700 10V11.800H3.500V10ZM5.100 10V11.800H6.900V10ZM8.500 10V11.800H10.300V10Z" fill-rule="evenodd"/></svg>
<div class="row" style="top:589.5px"></div>
<div class="cb" style="left:224px;top:598px;border-color:#9cb71f"></div>
<svg class="av" style="left:256.0px;top:594.0px;" width="32" height="32" viewBox="0 0 32 32"><use href="#p-hat"/></svg>
<div class="t " style="left:296px;top:603.00px;font-size:13px;">Users</div>
<div class="t date" style="left:601.02px;top:606.20px;font-size:10px;">1/10/2022</div>
<svg class="ic" viewBox="0 0 12 14" width="12.5" height="13.7" style="color:#2f9bbd;fill:#2f9bbd;left:585.02px;top:603px;" fill="currentColor"><path d="M0 3A1.300 1.300 0 0 1 1.300 1.700H2.600V0.500A0.500 0.500 0 0 1 3.100 0H3.900A0.500 0.500 0 0 1 4.400 0.500V1.700H7.600V0.500A0.500 0.500 0 0 1 8.100 0H8.900A0.500 0.500 0 0 1 9.400 0.500V1.700H10.700A1.300 1.300 0 0 1 12 3V4.300H0ZM0 5.200H12V12.700A1.300 1.300 0 0 1 10.700 14H1.300A1.300 1.300 0 0 1 0 12.700ZM1.700 6.600V8.400H3.500V6.600ZM5.100 6.600V8.400H6.900V6.600ZM8.500 6.600V8.400H10.300V6.600ZM1.700 10V11.800H3.500V10ZM5.100 10V11.800H6.900V10ZM8.500 10V11.800H10.300V10Z" fill-rule="evenodd"/></svg>
<div class="t cnt" style="left:565.292px;top:603.50px;font-size:13px;">1</div>
<svg class="ic" viewBox="0 0 12 12" width="11.3" height="11.3" style="color:#79bdd3;fill:#79bdd3;left:549.9920000000001px;top:604.1px;" fill="currentColor"><g transform="rotate(45 6 6)"><rect x="3.600" y="-0.800" width="4.800" height="13.600" rx="2.400" fill="currentColor" opacity=".55"/><rect x="3.600" y="-0.800" width="4.800" height="13.600" rx="2.400" fill="none" stroke="currentColor" stroke-width="1"/><path d="M6 2.200V9.200" stroke="#fff" stroke-width="1" opacity=".9"/></g></svg>
<div class="row" style="top:634.5px"></div>
<div class="cb" style="left:224px;top:643px;border-color:#c4b8f4"></div>
<svg class="av" style="left:256.0px;top:639.0px;" width="32" height="32" viewBox="0 0 32 32"><use href="#p-blazer"/></svg>
<div class="t " style="left:296px;top:648.00px;font-size:13px;">Budget Plan</div>
<div class="t date" style="left:601.02px;top:651.20px;font-size:10px;">1/12/2022</div>
<svg class="ic" viewBox="0 0 12 14" width="12.5" height="13.7" style="color:#2f9bbd;fill:#2f9bbd;left:585.02px;top:648px;" fill="currentColor"><path d="M0 3A1.300 1.300 0 0 1 1.300 1.700H2.600V0.500A0.500 0.500 0 0 1 3.100 0H3.900A0.500 0.500 0 0 1 4.400 0.500V1.700H7.600V0.500A0.500 0.500 0 0 1 8.100 0H8.900A0.500 0.500 0 0 1 9.400 0.500V1.700H10.700A1.300 1.300 0 0 1 12 3V4.300H0ZM0 5.200H12V12.700A1.300 1.300 0 0 1 10.700 14H1.300A1.300 1.300 0 0 1 0 12.700ZM1.700 6.600V8.400H3.500V6.600ZM5.100 6.600V8.400H6.900V6.600ZM8.500 6.600V8.400H10.300V6.600ZM1.700 10V11.800H3.500V10ZM5.100 10V11.800H6.900V10ZM8.500 10V11.800H10.300V10Z" fill-rule="evenodd"/></svg>
<div class="row" style="top:679.5px"></div>
<div class="cb" style="left:224px;top:688px;border-color:#9cb71f"></div>
<svg class="ic" style="left:230px;top:694px" width="12" height="12" viewBox="0 0 12 12"><path d="M0.600 1.100H11.700M4.500 6.100H11.700M4.500 11H11.700" stroke="#9cb71f" stroke-width="1.700" fill="none" opacity=".7"/></svg>
<svg class="av" style="left:256.0px;top:684.0px;" width="32" height="32" viewBox="0 0 32 32"><use href="#p-hat"/></svg>
<div class="t " style="left:296px;top:693.00px;font-size:13px;">App concepts</div>
<div class="t date" style="left:601.02px;top:696.20px;font-size:10px;">1/13/2022</div>
<svg class="ic" viewBox="0 0 12 14" width="12.5" height="13.7" style="color:#2f9bbd;fill:#2f9bbd;left:585.02px;top:693px;" fill="currentColor"><path d="M0 3A1.300 1.300 0 0 1 1.300 1.700H2.600V0.500A0.500 0.500 0 0 1 3.100 0H3.900A0.500 0.500 0 0 1 4.400 0.500V1.700H7.600V0.500A0.500 0.500 0 0 1 8.100 0H8.900A0.500 0.500 0 0 1 9.400 0.500V1.700H10.700A1.300 1.300 0 0 1 12 3V4.300H0ZM0 5.200H12V12.700A1.300 1.300 0 0 1 10.700 14H1.300A1.300 1.300 0 0 1 0 12.700ZM1.700 6.600V8.400H3.500V6.600ZM5.100 6.600V8.400H6.900V6.600ZM8.500 6.600V8.400H10.300V6.600ZM1.700 10V11.800H3.500V10ZM5.100 10V11.800H6.900V10ZM8.500 10V11.800H10.300V10Z" fill-rule="evenodd"/></svg>
<div class="t cnt" style="left:565.292px;top:693.50px;font-size:13px;">1</div>
<svg class="ic" viewBox="0 0 14 11" width="12" height="10" style="color:#3a9dbd;fill:#3a9dbd;left:547.792px;top:695.5px;" fill="currentColor"><path d="M4 1.300H14M4 5.500H14M4 9.700H14" stroke="currentColor" stroke-width="1.300" fill="none"/><circle cx="1.100" cy="1.300" r="1.100"/><circle cx="1.100" cy="5.500" r="1.100"/><circle cx="1.100" cy="9.700" r="1.100"/></svg>
<div class="t cnt" style="left:529.0640000000001px;top:693.50px;font-size:13px;">2</div>
<svg class="ic" viewBox="0 0 12 12" width="11.3" height="11.3" style="color:#79bdd3;fill:#79bdd3;left:513.7640000000001px;top:694.1px;" fill="currentColor"><g transform="rotate(45 6 6)"><rect x="3.600" y="-0.800" width="4.800" height="13.600" rx="2.400" fill="currentColor" opacity=".55"/><rect x="3.600" y="-0.800" width="4.800" height="13.600" rx="2.400" fill="none" stroke="currentColor" stroke-width="1"/><path d="M6 2.200V9.200" stroke="#fff" stroke-width="1" opacity=".9"/></g></svg>
<div class="abs" style="left:431px;top:731.200px;width:14px;height:14px;border-radius:50%;background:#fff"></div>
<svg class="ic" viewBox="0 0 512 512" width="16" height="16" style="color:#2b98b8;fill:#2b98b8;left:430.2px;top:730.2px;" fill="currentColor"><path d="M256 8C119 8 8 119 8 256s111 248 248 248 248-111 248-248S393 8 256 8zm144 276c0 6.600-5.400 12-12 12h-92v92c0 6.600-5.400 12-12 12h-56c-6.600 0-12-5.400-12-12v-92h-92c-6.600 0-12-5.400-12-12v-56c0-6.600 5.400-12 12-12h92v-92c0-6.600 5.400-12 12-12h56c6.600 0 12 5.400 12 12v92h92c6.600 0 12 5.400 12 12v56z"/></svg>
<div class="abs" style="left:215px;top:756px;width:447px;height:1px;background:#dedede"></div>
<div class="abs" style="left:215px;top:759px;width:447px;height:34px;background:#e7f3f7"></div>
<div class="abs" style="left:226px;top:769px;width:13px;height:13px;border-radius:50%;background:#fff"></div>
<svg class="ic" viewBox="0 0 512 512" width="15" height="15" style="color:#2b98b8;fill:#2b98b8;left:225px;top:768px;" fill="currentColor"><path d="M256 8C119 8 8 119 8 256s111 248 248 248 248-111 248-248S393 8 256 8zm144 276c0 6.600-5.400 12-12 12h-92v92c0 6.600-5.400 12-12 12h-56c-6.600 0-12-5.400-12-12v-92h-92c-6.600 0-12-5.400-12-12v-56c0-6.600 5.400-12 12-12h92v-92c0-6.600 5.400-12 12-12h56c6.600 0 12 5.400 12 12v92h92c6.600 0 12 5.400 12 12v56z"/></svg>
<div class="t " style="left:245px;top:768.50px;font-size:13px;color:#9fb3ba">Add New Section</div>
<div class="abs" style="left:662px;top:144px;width:8px;height:737px;background:linear-gradient(90deg,rgba(0,0,0,0),rgba(0,0,0,.05))"></div>
<div id="dp"></div>
<div class="t sm" style="left:695px;top:161.60px;font-size:10px;">Product Roadmap: December &nbsp;&gt;</div>
<svg class="ic" viewBox="0 0 12 14" width="12.3" height="14" style="color:#3a9dbd;fill:#3a9dbd;left:1258px;top:158px;" fill="currentColor"><path d="M0 3A1.300 1.300 0 0 1 1.300 1.700H2.600V0.500A0.500 0.500 0 0 1 3.100 0H3.900A0.500 0.500 0 0 1 4.400 0.500V1.700H7.600V0.500A0.500 0.500 0 0 1 8.100 0H8.900A0.500 0.500 0 0 1 9.400 0.500V1.700H10.700A1.300 1.300 0 0 1 12 3V4.300H0ZM0 5.200H12V12.700A1.300 1.300 0 0 1 10.700 14H1.300A1.300 1.300 0 0 1 0 12.700ZM1.700 6.600V8.400H3.500V6.600ZM5.100 6.600V8.400H6.900V6.600ZM8.500 6.600V8.400H10.300V6.600ZM1.700 10V11.800H3.500V10ZM5.100 10V11.800H6.900V10ZM8.500 10V11.800H10.300V10Z" fill-rule="evenodd"/></svg>
<div class="t sm" style="left:1274px;top:161.00px;font-size:10px;">December 29</div>
<div class="abs" style="left:1343px;top:155.500px;width:51px;height:18.700px;background:#3a9a85;border-radius:2px"></div>
<div class="t " style="left:1347px;top:160.70px;font-size:10px;color:#fff;-webkit-text-stroke:.3px #fff">Complete</div>
<svg class="ic" viewBox="0 0 4 14" width="4" height="13" style="color:#8a8a8a;fill:#8a8a8a;left:1402px;top:159px;" fill="currentColor"><circle cx="2" cy="2" r="1.100"/><circle cx="2" cy="7" r="1.100"/><circle cx="2" cy="12" r="1.100"/></svg>
<div class="abs" style="left:670px;top:183px;width:766px;height:1px;background:#e2e2e2"></div>
<div class="cb" style="left:695px;top:191px;width:27px;height:26.500px;"></div>
<svg class="ic" viewBox="0 0 13 12" width="16.2" height="15" style="color:#3a9a85;fill:#3a9a85;left:700.3px;top:196.3px;" fill="currentColor"><path d="M1.300 6.400L4.600 9.700L11.400 1.700" fill="none" stroke="currentColor" stroke-width="2.800"/></svg>
<div class="t " style="left:731.5px;top:195.50px;font-size:18px;font-weight:700;">Brainstorm</div>
<div class="t " style="left:695px;top:232.00px;font-size:13px;">Ideas and planning for the next year</div>
<svg class="av" style="left:695.0px;top:262.0px;" width="22" height="22" viewBox="0 0 32 32"><use href="#p-john"/></svg>
<div class="t " style="left:723px;top:266.50px;font-size:13px;font-weight:700;">John Millar</div>
<svg class="ic" viewBox="0 0 12 8" width="12.5" height="8.3" style="color:#2b2d4f;fill:#2b2d4f;left:797px;top:269.3px;" fill="currentColor"><path d="M1.200 1.500L6 6.300L10.800 1.500" fill="none" stroke="currentColor" stroke-width="1.800"/></svg>
<div class="t " style="left:683px;top:310.00px;font-size:13px;">Discussions</div>
<div class="t " style="left:781px;top:310.00px;font-size:13px;">Subtasks</div>
<div class="abs" style="left:839px;top:314px;width:5.500px;height:5.500px;border-radius:50%;background:#2b98b8"></div>
<div class="t " style="left:873.5px;top:310.00px;font-size:13px;">Files</div>
<div class="abs" style="left:905.5px;top:314px;width:5.500px;height:5.500px;border-radius:50%;background:#2b98b8"></div>
<div class="t " style="left:940px;top:310.00px;font-size:13px;">Followers</div>
<div class="abs" style="left:1000px;top:314px;width:5.500px;height:5.500px;border-radius:50%;background:#2b98b8"></div>
<div class="abs" style="left:670px;top:330px;width:98px;height:3px;background:#2b98b8"></div>
<div class="abs" style="left:670px;top:333px;width:766px;height:6px;background:linear-gradient(180deg,rgba(0,0,0,.09),rgba(0,0,0,0))"></div>
<svg class="ic" style="overflow:hidden;left:660px;top:197px" width="19" height="45" viewBox="445 0 19 45"><path d="M440 1H445.500L461.500 22.500L445.500 44H440Z" fill="#ebf5f3" stroke="#3a9a85" stroke-width="2"/></svg>
<div class="sep" style="left:684px;top:351.500px;width:732px"></div>
<svg class="av" style="left:693.5px;top:365.5px;" width="22" height="22" viewBox="0 0 32 32"><use href="#p-amanda"/></svg>
<div class="t " style="left:724px;top:369.50px;font-size:13px;font-weight:700;">Amanda Johnson</div>
<div class="t " style="left:724px;top:393.50px;font-size:13px;">Hey @<b>John Millar</b>, check out my product</div>
<div class="abs" style="left:964.300px;top:391.300px;width:18px;height:17.500px;border:2px solid #e88f7f;background:#fff"></div>
<div class="t " style="left:984.3px;top:393.50px;font-size:13px;"><b style="text-decoration:line-through">ideas</b>.</div>
<svg class="ic" style="left:724px;top:428px" width="118" height="73" viewBox="0 0 118 73">
<rect x=".5" y=".5" width="117" height="72" fill="#fff" stroke="#dcdcdc"/>
<rect x="1" y="9.500" width="17.500" height="53" fill="#f3f3f3"/>
<rect x="25.800" y="9.500" width="29.800" height="53" fill="#f3f3f3"/>
<rect x="62.800" y="9.500" width="30" height="53" fill="#f5f5f5"/>
<rect x="99.500" y="9.500" width="17.500" height="53" fill="#f1f1f1"/>
<rect x="1" y="39.500" width="15" height="4.500" fill="#8c8c8c"/><rect x="1" y="46" width="15" height="4.500" fill="#8c8c8c"/><rect x="1" y="52.300" width="15" height="4.700" fill="#2f80f7"/>
<rect x="2" y="18" width="6" height="5" rx="1.500" fill="#ddd"/><rect x="1" y="28" width="6" height="1.500" fill="#aaa"/><rect x="1" y="31.500" width="9" height="1" fill="#d5d5d5"/><rect x="1" y="34" width="8" height="1" fill="#d5d5d5"/>
<rect x="33" y="20" width="15" height="2.500" rx="1.200" fill="#d2d2d2"/><rect x="38.500" y="24" width="13" height="2.500" rx="1.200" fill="#8a8a8a"/><rect x="33" y="28" width="15" height="2.500" rx="1.200" fill="#d2d2d2"/><rect x="36" y="32" width="15.500" height="3.500" rx="1.700" fill="#777"/>
<rect x="27.500" y="40.500" width="14" height="1.800" fill="#c8c8c8"/><rect x="27.500" y="44" width="22" height="1" fill="#dadada"/><rect x="27.500" y="46" width="22" height="1" fill="#dadada"/><rect x="27.500" y="48" width="9" height="1" fill="#dadada"/>
<rect x="28" y="52.300" width="25" height="4.700" fill="#2f80f7"/>
<rect x="65" y="19.500" width="16" height="2" fill="#bcbcbc"/>
<circle cx="66.700" cy="25.700" r="1.800" fill="#bdbdbd"/><circle cx="66.700" cy="36" r="1.800" fill="#bdbdbd"/><circle cx="66.700" cy="46.500" r="1.800" fill="#bdbdbd"/><circle cx="66.700" cy="57" r="1.800" fill="#bdbdbd"/>
<rect x="70" y="24.500" width="8" height="1" fill="#ccc"/><rect x="70" y="28" width="9" height="1" fill="#e0e0e0"/><rect x="70" y="35" width="10" height="1" fill="#bbb"/><rect x="70" y="38.500" width="9" height="1" fill="#e0e0e0"/><rect x="70" y="45.500" width="15" height="1" fill="#ccc"/><rect x="70" y="49" width="9" height="1" fill="#e0e0e0"/><rect x="70" y="56.500" width="5" height="1" fill="#ccc"/>
<rect x="62.800" y="58.800" width="30" height="3.700" fill="#fafafa"/><rect x="76.800" y="60" width="2.200" height="1.800" fill="#2f80f7"/>
<rect x="101.300" y="24" width="12.500" height="16" fill="#b1b1b1"/><rect x="115" y="24" width="2" height="16" fill="#b1b1b1"/><rect x="106" y="30" width="3.600" height="3.600" fill="#d8d8d8"/>
<rect x="102" y="20.500" width="6" height="1.400" fill="#ccc"/><rect x="99.500" y="14" width="11" height=".9" fill="#c4c4c4"/>
<circle cx="114.500" cy="53" r="1.800" fill="none" stroke="#c0c0c0" stroke-width=".6"/><rect x="107.500" y="60" width="2" height="1.500" fill="#2f80f7"/><rect x="50.500" y="60" width="1" height="1.500" fill="#2f80f7"/>
</svg>
<div class="t act12" style="left:724px;top:521.50px;font-size:12px;">Edit</div>
<div class="dot" style="left:754.5px;top:526.0px"></div>
<svg class="ic" viewBox="0 0 14 13" width="12.5" height="12" style="color:#2b98b8;fill:#2b98b8;left:767.5px;top:519.5px;" fill="currentColor"><rect x="0" y="5.800" width="2.800" height="6.800" rx=".5"/><path d="M3.800 6.200C5.200 5.200 5.900 3.600 6.200 1.400C6.300 0.500 7 0 7.700 0.300C8.800 0.700 9.100 2 8.800 3.200L8.400 4.800H12.300C13.300 4.800 14 5.600 13.800 6.500L12.800 11.300C12.600 12.100 12 12.600 11.200 12.600H5.600L3.800 11.800Z"/></svg>
<div class="t act12" style="left:784.5px;top:521.50px;font-size:12px;">Like</div>
<div class="dot" style="left:816.5px;top:526.0px"></div>
<svg class="ic" viewBox="0 0 14 12" width="12.5" height="10.5" style="color:#2b98b8;fill:#2b98b8;left:830.5px;top:521.0px;" fill="currentColor"><path d="M0.300 4.700L5.500 0.300C5.900 -0.100 6.600 0.200 6.600 0.800V3.100C11.100 3.200 14 4.200 14 8.400C14 10.100 12.900 11.600 11.700 12C11.300 12.100 11 11.800 11.200 11.400C12.300 8 10.600 7.100 6.600 7V9.400C6.600 10 5.900 10.300 5.500 9.900L0.300 5.500C0 5.300 0 4.900 0.300 4.700Z"/></svg>
<div class="t act12" style="left:846.5px;top:521.50px;font-size:12px;">Reply</div>
<div class="t sm" style="left:905px;top:523.70px;font-size:10px;">May 7</div>
<div class="dot" style="left:949.5px;top:526.0px"></div>
<div class="t sm" style="left:971px;top:523.70px;font-size:10px;">Seen by <b>John</b> and <b>Amanda</b></div>
<div class="sep" style="left:684px;top:555px;width:732px"></div>
<svg class="av" style="left:693.5px;top:568.5px;" width="22" height="22" viewBox="0 0 32 32"><use href="#p-amanda"/></svg>
<div class="t " style="left:724px;top:572.50px;font-size:13px;font-weight:700;">Amanda Johnson</div>
<div class="t " style="left:724px;top:596.50px;font-size:13px;">@<b>team</b>, any ideas?</div>
<div class="t act12" style="left:724px;top:623.50px;font-size:12px;">Edited</div>
<div class="dot" style="left:768px;top:628.0px"></div>
<div class="t act12" style="left:782.5px;top:623.50px;font-size:12px;">Edit</div>
<div class="dot" style="left:812.5px;top:628.0px"></div>
<svg class="ic" viewBox="0 0 14 13" width="12.5" height="12" style="color:#2b98b8;fill:#2b98b8;left:826px;top:621.5px;" fill="currentColor"><rect x="0" y="5.800" width="2.800" height="6.800" rx=".5"/><path d="M3.800 6.200C5.200 5.200 5.900 3.600 6.200 1.400C6.300 0.500 7 0 7.700 0.300C8.800 0.700 9.100 2 8.800 3.200L8.400 4.800H12.300C13.300 4.800 14 5.600 13.800 6.500L12.800 11.300C12.600 12.100 12 12.600 11.200 12.600H5.600L3.800 11.800Z"/></svg>
<div class="t act12" style="left:842.5px;top:623.50px;font-size:12px;">Like</div>
<div class="dot" style="left:874.5px;top:628.0px"></div>
<svg class="ic" viewBox="0 0 14 12" width="12.5" height="10.5" style="color:#2b98b8;fill:#2b98b8;left:888.5px;top:623.0px;" fill="currentColor"><path d="M0.300 4.700L5.500 0.300C5.900 -0.100 6.600 0.200 6.600 0.800V3.100C11.100 3.200 14 4.200 14 8.400C14 10.100 12.900 11.600 11.700 12C11.300 12.100 11 11.800 11.200 11.400C12.300 8 10.600 7.100 6.600 7V9.400C6.600 10 5.900 10.300 5.500 9.900L0.300 5.500C0 5.300 0 4.900 0.300 4.700Z"/></svg>
<div class="t act12" style="left:904.5px;top:623.50px;font-size:12px;">Reply</div>
<div class="t sm" style="left:963.5px;top:625.70px;font-size:10px;">Aug 13</div>
<div class="dot" style="left:1012px;top:628.0px"></div>
<div class="t sm" style="left:1033.5px;top:625.70px;font-size:10px;">Seen by <b>John</b> and <b>Amanda</b></div>
<div class="abs" style="left:703px;top:651px;width:1px;height:69.500px;background:#d3dae4"></div>
<svg class="av" style="left:716.0px;top:650.5px;" width="22" height="22" viewBox="0 0 32 32"><use href="#p-ryah"/></svg>
<div class="t " style="left:747px;top:654.50px;font-size:13px;font-weight:700;">Ryah Wright</div>
<div class="t " style="left:747px;top:678.50px;font-size:13px;">App needs to feature profile stats.</div>
<svg class="ic" viewBox="0 0 14 13" width="12.5" height="12" style="color:#2b98b8;fill:#2b98b8;left:747px;top:704px;" fill="currentColor"><rect x="0" y="5.800" width="2.800" height="6.800" rx=".5"/><path d="M3.800 6.200C5.200 5.200 5.900 3.600 6.200 1.400C6.300 0.500 7 0 7.700 0.300C8.800 0.700 9.100 2 8.800 3.200L8.400 4.800H12.300C13.300 4.800 14 5.600 13.800 6.500L12.800 11.300C12.600 12.100 12 12.600 11.200 12.600H5.600L3.800 11.800Z"/></svg>
<div class="t act12" style="left:763px;top:706.00px;font-size:12px;">Like</div>
<div class="t sm" style="left:813px;top:708.20px;font-size:10px;">Aug 26</div>
<div class="dot" style="left:862px;top:710.5px"></div>
<div class="t sm" style="left:883px;top:708.20px;font-size:10px;">Seen by <b>John</b>, <b>Ryah</b> and <b>Amanda</b></div>
<div class="abs" style="left:703px;top:729px;width:1px;height:70px;background:#d3dae4"></div>
<svg class="av" style="left:716.0px;top:728.5px;" width="22" height="22" viewBox="0 0 32 32"><use href="#p-john"/></svg>
<div class="t " style="left:747px;top:732.50px;font-size:13px;font-weight:700;">John Millar</div>
<div class="t " style="left:747px;top:756.50px;font-size:13px;">Great idea. They should be able to share it with friends.</div>
<svg class="ic" viewBox="0 0 14 13" width="12.5" height="12" style="color:#2b98b8;fill:#2b98b8;left:747px;top:782px;" fill="currentColor"><rect x="0" y="5.800" width="2.800" height="6.800" rx=".5"/><path d="M3.800 6.200C5.200 5.200 5.900 3.600 6.200 1.400C6.300 0.500 7 0 7.700 0.300C8.800 0.700 9.100 2 8.800 3.200L8.400 4.800H12.300C13.300 4.800 14 5.600 13.800 6.500L12.800 11.300C12.600 12.100 12 12.600 11.200 12.600H5.600L3.800 11.800Z"/></svg>
<div class="t act12" style="left:763px;top:784.00px;font-size:12px;">Like</div>
<div class="dot" style="left:795px;top:788.5px"></div>
<svg class="ic" viewBox="0 0 14 12" width="12.5" height="10.5" style="color:#2b98b8;fill:#2b98b8;left:809px;top:783.5px;" fill="currentColor"><path d="M0.300 4.700L5.500 0.300C5.900 -0.100 6.600 0.200 6.600 0.800V3.100C11.100 3.200 14 4.200 14 8.400C14 10.100 12.900 11.600 11.700 12C11.300 12.100 11 11.800 11.200 11.400C12.300 8 10.600 7.100 6.600 7V9.400C6.600 10 5.900 10.300 5.500 9.900L0.300 5.500C0 5.300 0 4.900 0.300 4.700Z"/></svg>
<div class="t act12" style="left:825px;top:784.00px;font-size:12px;">Reply</div>
<div class="t sm" style="left:883.5px;top:786.20px;font-size:10px;">Aug 26</div>
<div class="dot" style="left:932.5px;top:788.5px"></div>
<div class="t sm" style="left:953.5px;top:786.20px;font-size:10px;">Seen by <b>John</b> and <b>Amanda</b></div>
<div class="sep" style="left:684px;top:808px;width:732px"></div>
<div class="abs" style="left:1424px;top:501px;width:8px;height:322px;border-radius:4px;background:#cecece"></div>
<div class="abs" style="left:680px;top:830px;width:746px;height:39px;background:#fff;border:1px solid #dcdcdc;border-radius:2px"></div>
<svg class="av" style="left:688.5px;top:838.0px;" width="22" height="22" viewBox="0 0 32 32"><use href="#p-amanda"/></svg>
<div class="t " style="left:718.5px;top:842.00px;font-size:13px;color:#a9a9a9">Discuss this task with the team ...</div>
<div class="abs" style="left:1448px;top:0;width:62px;height:890px;background:#fff;border-left:1px solid #dedede"></div>
<div class="abs" style="left:1449px;top:47px;width:61px;height:1px;background:#dedede"></div>
<div class="abs" style="left:1449px;top:86px;width:61px;height:1px;background:#dedede"></div>
<svg class="av" style="left:1466.5px;top:8.5px;" width="28" height="28" viewBox="0 0 32 32"><use href="#p-amanda"/></svg>
<div class="abs" style="left:1487.500px;top:27.500px;width:10px;height:10px;border-radius:50%;background:#3a9a85"></div>
<svg class="ic" viewBox="0 0 18 14" width="17" height="12" style="color:#3a9dbd;fill:#3a9dbd;left:1472px;top:53px;" fill="currentColor"><path d="M6.500 0C10.100 0 13 2.200 13 5S10.100 10 6.500 10C5.600 10 4.800 9.900 4 9.600C3.200 10.300 2 10.900 0.300 11C0.100 11 0 10.800 0.100 10.600C0.800 9.900 1.300 9 1.500 8.200C0.600 7.300 0 6.200 0 5C0 2.200 2.900 0 6.500 0Z"/><path d="M14.300 5.200C16.400 5.900 18 7.400 18 9.200C18 10.300 17.500 11.300 16.600 12.100C16.800 12.800 17.200 13.400 17.900 13.700C18 13.900 17.900 14 17.700 14C16.300 13.900 15.200 13.400 14.400 12.900C13.700 13.100 12.900 13.200 12.100 13.200C9.700 13.200 7.600 12.200 6.700 10.900C10.800 10.900 14.200 8.500 14.300 5.200Z"/></svg>
<div class="t " style="left:1464.5px;top:69.00px;font-size:14px;font-weight:700;">Chat</div>
<svg class="av" style="left:1466.5px;top:102.5px;" width="28" height="28" viewBox="0 0 32 32"><use href="#p-ryah"/></svg>
<svg class="av" style="left:1466.5px;top:146.5px;" width="28" height="28" viewBox="0 0 32 32"><use href="#p-john"/></svg>
<svg class="av" style="left:1466.5px;top:190.5px;" width="28" height="28" viewBox="0 0 32 32"><use href="#p-bald"/></svg>
<svg class="av" style="left:1466.5px;top:234.5px;" width="28" height="28" viewBox="0 0 32 32"><use href="#p-curly"/></svg>
<svg class="av" style="left:1466.5px;top:278.5px;" width="28" height="28" viewBox="0 0 32 32"><use href="#p-greenman"/><circle cx="16" cy="16" r="14.900" fill="none" stroke="#b45cc4" stroke-width="2.300"/></svg>
<svg class="av" style="left:1466.5px;top:322.5px;" width="28" height="28" viewBox="0 0 32 32"><use href="#p-brownhair"/><circle cx="16" cy="16" r="14.900" fill="none" stroke="#b45cc4" stroke-width="2.300"/></svg>
<svg class="av" style="left:1466.5px;top:366.5px;" width="28" height="28" viewBox="0 0 32 32"><use href="#p-hat"/></svg>
<svg class="av" style="left:1466.5px;top:410.5px;" width="28" height="28" viewBox="0 0 32 32"><use href="#p-blazer"/></svg>
<svg class="av" style="left:1466.5px;top:454.5px;" width="28" height="28" viewBox="0 0 32 32"><use href="#p-darkhair"/><circle cx="16" cy="16" r="14.900" fill="none" stroke="#f0e11a" stroke-width="2.300"/></svg>
<svg class="av" style="left:1466.5px;top:498.5px;" width="28" height="28" viewBox="0 0 32 32"><use href="#p-blonde"/><circle cx="16" cy="16" r="14.900" fill="none" stroke="#b45cc4" stroke-width="2.300"/></svg>
<div class="abs" style="left:0;top:883px;width:7px;height:7px;background:radial-gradient(circle at 100% 0,rgba(12,6,40,0) 6.200px,#0c0628 7.200px)"></div>
<div class="abs" style="left:1506px;top:886px;width:4px;height:4px;background:radial-gradient(circle at 0 0,rgba(12,6,40,0) 3px,#1a0a50 4px)"></div>
<div class="abs" style="left:0;top:0;width:1px;height:890px;background:rgba(255,255,255,.08)"></div>
</div>
</body></html>
